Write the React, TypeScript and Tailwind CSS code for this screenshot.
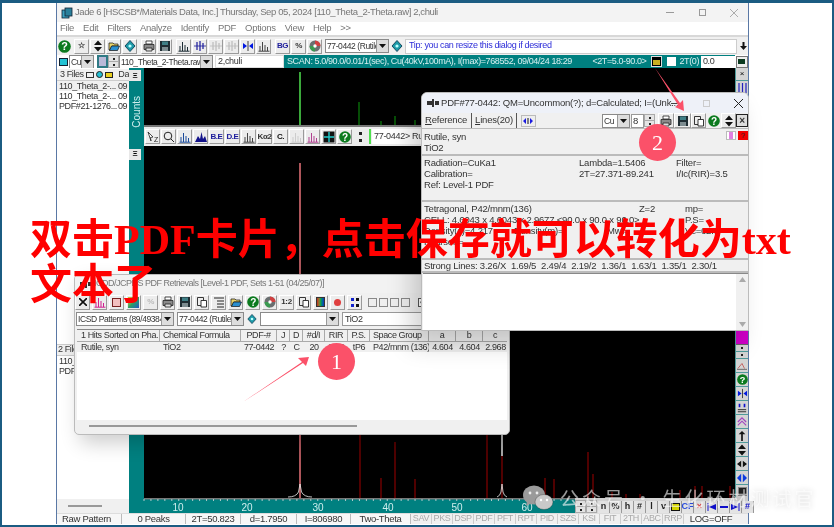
import React from "react";

function Tb({ children, w = "w-[15px]" }: { children?: React.ReactNode; w?: string }) {
  return (
    <div className={`${w} h-[15px] shrink-0 flex items-center justify-center bg-[#ececec] border-r border-b border-[#9a9a9a] border-t-white border-l-white border-t border-l`}>
      {children}
    </div>
  );
}
function S({ children, s = 12 }: { children: React.ReactNode; s?: number }) {
  return <svg width={s} height={s} viewBox="0 0 12 12">{children}</svg>;
}
const Help = ({ s = 12 }: { s?: number }) => (
  <S s={s}>
    <circle cx="6" cy="6" r="5.8" fill="#0b7a1e" />
    <text x="6" y="9.6" textAnchor="middle" fontSize="10" fontWeight="700" fill="#fff" fontFamily="Liberation Sans">?</text>
  </S>
);
const UpDown = () => (
  <S><path d="M6 0.5 10 5H2ZM6 11.5 2 7H10Z" fill="#111" /></S>
);
const Folder = () => (
  <S><path d="M1 3h4l1 1h4v2H4L2 10H1Z" fill="#e8d36a" stroke="#111" strokeWidth=".7" /><path d="M3.5 6H11.5L9.5 10.5H1.5Z" fill="#2a8fd0" stroke="#111" strokeWidth=".7" /></S>
);
const Printer = () => (
  <S><path d="M3 1h6v3H3Z" fill="#fff" stroke="#222" strokeWidth=".8" /><path d="M1 4.5h10v5H1Z" fill="#8a8a8a" stroke="#222" strokeWidth=".8" /><path d="M3 8h6v3H3Z" fill="#ddd" stroke="#222" strokeWidth=".8" /></S>
);
const Floppy = () => (
  <S><path d="M1 1h10v10H1Z" fill="#1f2d33" /><path d="M3 1.5h6v3.5H3Z" fill="#3f7f86" /><path d="M3 7h6v4H3Z" fill="#7d8c90" /></S>
);
const Copy = () => (
  <S><path d="M1.5 1.5h6v8h-6Z" fill="#eee" stroke="#222" strokeWidth=".9" /><path d="M5 4.5h5.5v6.5H5Z" fill="#fff" stroke="#222" strokeWidth=".9" /></S>
);
const Bars = ({ c = "#1b2a33" }: { c?: string }) => (
  <S><path d="M2 11V6M4.5 11V2M7 11V5M9.5 11V7M0.5 11.2H11.5" stroke={c} strokeWidth="1" fill="none" /></S>
);
const Marks = ({ c = "#1a1a9a" }: { c?: string }) => (
  <S><path d="M0 6H12" stroke={c} strokeWidth=".8" /><path d="M3 2V10M6 1V11M9 3V9" stroke={c} strokeWidth="1.2" /></S>
);
const Diamond = () => (
  <S><path d="M6 0.5 11 6 6 11.5 1 6Z" fill="#1c9aa8" stroke="#0c3d55" strokeWidth=".9" /><circle cx="6" cy="6" r="1.6" fill="#bff" /></S>
);
const Disc = () => (
  <S><circle cx="6" cy="6" r="5.5" fill="#6a6f70" /><path d="M6 .5A5.5 5.5 0 0 1 11.5 6H6Z" fill="#d04040" /><path d="M6 11.5A5.5 5.5 0 0 1 .5 6H6Z" fill="#3a9a50" /><circle cx="6" cy="6" r="1.7" fill="#fff" /></S>
);
const Arrows = ({ c = "#0018e0" }: { c?: string }) => (
  <S><path d="M5 6 1 3V9ZM7 6 11 3V9Z" fill={c} /><path d="M6 1V11" stroke="#111" strokeWidth=".8" /></S>
);
const Box = () => <div className="w-[9px] h-[9px] bg-[#eee] border border-[#888]" />;
const Lbl = ({ t, c = "text-[#333]" }: { t: string; c?: string }) => (
  <span className={`text-[8px] font-bold leading-none tracking-[-0.4px] ${c}`}>{t}</span>
);

function Combo({ text, w }: { text: string; w: string }) {
  return (
    <div className={`${w} h-[14px] shrink-0 flex items-stretch bg-white border border-[#8a8a8a] overflow-hidden`}>
      <span className="flex-1 min-w-0 px-px text-[8.5px] tracking-[-0.4px] leading-[12px] whitespace-nowrap overflow-hidden text-[#333]">{text}</span>
      <span className="w-[12px] shrink-0 bg-[#ddd] flex items-center justify-center border-l border-[#999]">
        <svg width="7" height="4" viewBox="0 0 7 4"><path d="M0 0H7L3.5 4Z" fill="#111" /></svg>
      </span>
    </div>
  );
}

function Spin() {
  return (
    <div className="w-[11px] h-[13px] shrink-0 flex flex-col bg-[#e4e4e4] border border-[#aaa]">
      <div className="flex-1 flex items-center justify-center border-b border-[#aaa]"><div className="w-[2px] h-[2px] bg-[#222]" /></div>
      <div className="flex-1 flex items-center justify-center"><div className="w-[2px] h-[2px] bg-[#222]" /></div>
    </div>
  );
}

function TopChart() {
  const peaks: [number, number][] = [[359, 102], [381, 121], [395, 116], [415, 120], [300, 72]];
  return (
    <svg className="block w-[592px] h-[57px] shrink-0 bg-black" viewBox="144 68 592 57">
      {peaks.map(([x, y]) => (
        <line key={x} x1={x} x2={x} y1={y} y2={125} stroke={x === 300 ? "#4fe04f" : "#0c9a0c"} strokeWidth={x === 300 ? 1.5 : 1} />
      ))}
    </svg>
  );
}

function LowerChart() {
  const peaks: [number, number][] = [[360, 290], [381, 478], [395, 442], [415, 479], [487, 400], [502, 456], [545, 478], [554, 479], [588, 452], [593, 474], [612, 492], [626, 494], [640, 494], [680, 490], [695, 486], [702, 486], [730, 486]];
  return (
    <svg className="block w-[592px] h-[352px] bg-black" viewBox="144 146 592 352">
      <line x1={300} x2={300} y1={163} y2={498} stroke="#e8737a" strokeWidth={1.5} />
      {peaks.map(([x, y]) => (
        <line key={x} x1={x} x2={x} y1={y} y2={498} stroke="#a00000" strokeWidth={1} />
      ))}
      <line x1={502} x2={502} y1={430} y2={456} stroke="#e0e0e0" strokeWidth={1.5} />
      <path d="M288 497 Q296 497 298.5 492 L300 484 L301.5 492 Q304 497 312 497" fill="none" stroke="#eee" strokeWidth=".8" />
      <path d="M497 497 Q500 496 501 492 L502 484 L503 492 Q504 496 507 497" fill="none" stroke="#eee" strokeWidth=".8" />
    </svg>
  );
}

function Axis() {
  const ticks = Array.from({ length: 62 }, (_, i) => 144 + i * 6.95);
  return (
    <svg className="block w-[446px] h-[15px] shrink-0 bg-[#008080]" viewBox="129 498 446 15">
      <rect x={144} y={498} width={431} height={1.5} fill="#777" />
      {ticks.map((x) => <line key={x} x1={x} x2={x} y1={499} y2={501} stroke="#ddd" strokeWidth=".8" />)}
      {[[178, "10"], [247, "20"], [318, "30"], [388, "40"], [457, "50"], [527, "60"]].map(([x, t]) => (
        <text key={t} x={x as number} y={511} textAnchor="middle" fontSize="10" fill="#cfeeee" fontFamily="Liberation Sans">{t}</text>
      ))}
    </svg>
  );
}

function SideBtn({ children, h = "h-[14px]" }: { children?: React.ReactNode; h?: string }) {
  return <div className={`${h} w-[12px] shrink-0 flex items-center justify-center bg-[#d4d4d4] border-b border-[#4f9a9a]`}>{children}</div>;
}

function AxisKey({ children, cls = "text-[#222]" }: { children: React.ReactNode; cls?: string }) {
  return <div className={`w-[12px] h-[12px] shrink-0 flex items-center justify-center bg-[#e4e4e4] border-r border-[#999] text-[9px] font-bold ${cls}`}>{children}</div>;
}

function MainWindow() {
  const status: [string, string][] = [
    ["Raw Pattern", "w-[65px] pr-[5px]"], ["0 Peaks", "w-[64px]"], ["2T=50.823", "w-[55px]"], ["d=1.7950", "w-[56px]"], ["I=806980", "w-[54px]"], ["Two-Theta", "w-[60px]"],
  ];
  const small = ["SAV", "PKS", "DSP", "PDF", "PFT", "RPT", "PID", "SZS", "KSI", "FIT", "2TH", "ABC", "RRP"];
  return (
    <div className="w-[693px] h-[521px] flex flex-col border-x border-[#5a78a5] bg-[#f0f0f0]">
      <div className="h-[19px] shrink-0 flex items-center pl-[4px] bg-[#f3f3f3] text-[#777] text-[9.5px] tracking-[-0.4px] whitespace-nowrap">
        <svg width="12" height="12" viewBox="0 0 12 12" className="mr-[2px]"><rect x="1" y="3" width="7" height="8" fill="#3aa0c0" stroke="#123" strokeWidth=".8" /><rect x="4" y="1" width="7" height="8" fill="#2a7f9a" stroke="#123" strokeWidth=".8" /></svg>
        <span className="flex-1">Jade 6 [HSCSB*/Materials Data, Inc.] Thursday, Sep 05, 2024 [110_Theta_2-Theta.raw] 2,chuli</span>
        <div className="w-[88px] flex justify-between items-center pl-[6px] pr-[10px]">
          <div className="w-[8px] h-px bg-[#999]" />
          <div className="w-[7px] h-[7px] border border-[#999]" />
          <svg width="8" height="8" viewBox="0 0 8 8"><path d="M0 0 8 8M8 0 0 8" stroke="#999" strokeWidth=".8" /></svg>
        </div>
      </div>
      <div className="h-[13px] shrink-0 flex items-center gap-[9px] pl-[3px] bg-white text-[#777] text-[9.5px] tracking-[-0.3px]">
        {["File", "Edit", "Filters", "Analyze", "Identify", "PDF", "Options", "View", "Help", ">>"].map((m) => <span key={m}>{m}</span>)}
      </div>
      <div className="h-[2px] shrink-0 bg-[#d8d8d8]" />
      <div className="h-[18px] shrink-0 flex items-center pl-[1px] gap-px bg-[#f0f0f0]">
        <Help s={13} />
        <div className="w-px" />
        <Tb><Lbl t="☆" /></Tb><Tb><UpDown /></Tb><Tb><Folder /></Tb><Tb><Diamond /></Tb>
        <div className="w-[2px]" />
        <Tb><Printer /></Tb><Tb><Floppy /></Tb>
        <div className="w-[2px]" />
        <Tb><Bars /></Tb><Tb><Marks /></Tb><Tb><Marks c="#bbb" /></Tb><Tb><Marks c="#bbb" /></Tb><Tb><Arrows /></Tb><Tb><Bars c="#444" /></Tb>
        <div className="w-[2px]" />
        <Tb><Lbl t="BG" c="text-[#1a1a9a]" /></Tb><Tb><Lbl t="%" /></Tb><Tb><Disc /></Tb>
        <div className="w-px" />
        <Combo text="77-0442 (Rutile" w="w-[64px]" />
        <div className="w-[14px] h-[15px] flex items-center justify-center"><Diamond /></div>
        <div className="flex-1 h-[15px] flex items-center pl-[3px] bg-white border border-[#ccc] text-[9px] tracking-[-0.35px] text-[#2d2dd8] whitespace-nowrap">Tip: you can resize this dialog if desired</div>
        <div className="w-[10px] flex justify-center"><svg width="7" height="8" viewBox="0 0 7 8"><path d="M2.5 0h2v4H7L3.5 8 0 4h2.5Z" fill="#111" /></svg></div>
      </div>
      <div className="h-[13px] shrink-0 flex items-center bg-white">
        <div className="w-[12px] shrink-0 flex justify-center"><div className="w-[9px] h-[8px] bg-[#24c3d4] border border-[#123]" /></div>
        <Combo text="Cu" w="w-[25px]" />
        <div className="w-[3px] shrink-0" />
        <div className="w-[11px] h-[13px] shrink-0 bg-[#b9b9d8] border-2 border-[#2f7a85]" />
        <Spin />
        <Combo text="110_Theta_2-Theta.raw" w="w-[94px]" />
        <div className="w-[2px] shrink-0" />
        <div className="w-[69px] shrink-0 h-[13px] border border-[#ddd] pl-[2px] text-[9px] tracking-[-0.3px] leading-[11px] text-[#333]">2,chuli</div>
        <div className="flex-1 min-w-0 h-[13px] flex items-center pl-[3px] bg-[#008080] text-[#d8f0f0] text-[9px] tracking-[-0.4px] whitespace-nowrap overflow-hidden">
          <span className="flex-1">SCAN: 5.0/90.0/0.01/1(sec), Cu(40kV,100mA), I(max)=768552, 09/04/24 18:29</span>
          <span className="mr-[5px]">&lt;2T=5.0-90.0&gt;</span>
          <div className="w-[11px] h-[11px] bg-black border border-[#ddd] mr-[5px]"><div className="w-[7px] h-[5px] mx-auto mt-[3px] bg-[#c8b020]" /></div>
          <div className="w-[9px] h-[9px] bg-white mr-[3px]" />
          <span className="mr-[2px]">2T(0)</span>
          <div className="w-[34px] h-[12px] bg-white text-[#333] pl-[2px] leading-[11px]">0.0</div>
        </div>
        <div className="w-[13px] shrink-0 flex justify-center"><div className="w-[12px] h-[12px] flex items-center justify-center bg-[#eee] border border-[#777]"><div className="w-[7px] h-[5px] bg-[#0b3a20]" /></div></div>
      </div>
      <div className="flex-1 flex min-h-0">
        <div className="w-[72px] shrink-0 flex flex-col bg-white text-[9px] tracking-[-0.4px] text-[#333] whitespace-nowrap overflow-hidden">
          <div className="h-[12px] mt-px flex items-center bg-[#f0f0f0] border-b border-[#ccc]">
            <span className="pl-[3px] w-[60px] flex gap-[2px] items-center">3 Files
              <span className="w-[8px] h-[6px] border border-[#333]" /><span className="w-[7px] h-[7px] bg-[#22bcd0] rounded-full border border-[#222]" /><span className="w-[8px] h-[6px] bg-[#ead020] border border-[#222]" /></span>
            <span className="pl-[2px]">Da</span>
          </div>
          {["110_Theta_2-...", "110_Theta_2-...", "PDF#21-1276..."].map((f, i) => (
            <div key={i} className={`h-[10px] shrink-0 flex leading-[10px] ${i === 0 ? "bg-[#f0f0f0]" : ""}`}>
              <span className="pl-[2px] w-[61px]">{f}</span><span>09</span>
            </div>
          ))}
          <div className="mt-[233px] h-[12px] flex items-center bg-[#f0f0f0] border-y border-[#ccc] pl-[1px]">2 Files</div>
          <div className="h-[10px] leading-[10px] pl-[2px]">110_Theta_2-...</div>
          <div className="h-[10px] leading-[10px] pl-[2px]">PDF#21-1276...</div>
          <div className="flex-1" />
          <div className="h-[14px] flex items-center bg-[#f0f0f0] pl-[11px]"><div className="w-[34px] h-[2px] bg-[#999]" /></div>
        </div>
        <div className="flex-1 flex flex-col min-w-0">
          <div className="flex-1 flex min-h-0">
            <div className="w-[15px] shrink-0 flex flex-col bg-[#008080]">
              <div className="h-[11px] mt-[2px] mr-[3px] bg-[#e8e8e8] flex items-center justify-center text-[8px] font-bold">Ξ</div>
              <span className="mt-[15px] [writing-mode:vertical-rl] rotate-180 text-[10px] text-[#cfeeee] self-center">Counts</span>
              <div className="h-[11px] mt-[21px] mr-[3px] bg-[#e8e8e8] flex items-center justify-center text-[8px] font-bold">Ξ</div>
            </div>
            <div className="flex-1 flex flex-col min-w-0 overflow-hidden">
              <TopChart />
              <div className="h-[2px] shrink-0 bg-[#777]" />
              <div className="h-[19px] shrink-0 flex items-center gap-px pl-[1px] bg-[#ececec]">
                <Tb><svg width="12" height="12" viewBox="0 0 12 12"><path d="M1 1 6 6 3.5 6.5 4 10Z" fill="#fff" stroke="#222" strokeWidth=".8" /><text x="7" y="11" fontSize="7" fill="#222">Z</text></svg></Tb>
                <Tb><svg width="12" height="12" viewBox="0 0 12 12"><circle cx="5" cy="5" r="3.8" fill="none" stroke="#222" /><path d="M8 8l3 3" stroke="#222" /></svg></Tb>
                <Tb><Bars c="#1a4a9a" /></Tb><Tb><svg width="12" height="12" viewBox="0 0 12 12"><path d="M0 11 3 5 5 8 6.5 1 8 8 10 5 12 11Z" fill="#12128a" /></svg></Tb>
                <Tb><Lbl t="B.E" c="text-[#1a1a9a]" /></Tb><Tb><Lbl t="D.E" c="text-[#1a1a9a]" /></Tb><Tb><Bars c="#444" /></Tb>
                <Tb><Lbl t="Kα2" /></Tb><Tb><Lbl t="C." c="text-[#111]" /></Tb><Tb><Bars c="#ccc" /></Tb><Tb><Bars c="#b04090" /></Tb>
                <Tb><svg width="12" height="12" viewBox="0 0 12 12"><rect x=".5" y=".5" width="11" height="11" fill="#111" /><path d="M6 1V11M1 6H11" stroke="#2cc" strokeWidth="1.4" /></svg></Tb>
                <Tb><Help /></Tb>
                <div className="w-[15px] h-[19px] flex flex-col items-center justify-center gap-[4px]"><div className="w-[3px] h-[3px] bg-[#222]" /><div className="w-[3px] h-[3px] bg-[#222]" /></div>
                <div className="w-[2px] h-[15px] bg-[#4ee04e]" />
                <div className="w-[120px] h-[15px] bg-white pl-[2px] text-[9px] tracking-[-0.3px] leading-[15px] text-[#333] whitespace-nowrap">77-0442&gt; Rutile</div>
              </div>
              <div className="flex-1 min-h-0"><LowerChart /></div>
            </div>
            <div className="w-[13px] shrink-0 flex flex-col bg-[#c8c8c8] border-l border-[#4f9a9a] text-[8px]">
              <SideBtn h="h-[13px]">×</SideBtn>
              <SideBtn h="h-[15px]"><svg width="9" height="10" viewBox="0 0 9 10"><path d="M1 0V10M4.5 0V10M8 0V10" stroke="#2222c0" strokeWidth="1.2" /></svg></SideBtn>
              <div className="h-[235px] shrink-0" />
              <div className="h-[14px] shrink-0 bg-[#d000c8] border-b border-[#666]" />
              <SideBtn h="h-[7px]"><div className="w-[2px] h-[2px] bg-[#222]" /></SideBtn>
              <SideBtn h="h-[7px]"><div className="w-[2px] h-[2px] bg-[#222]" /></SideBtn>
              <SideBtn><S s={10}><path d="M1 9 6 3 9 9" stroke="#c05050" fill="none" /><path d="M0 10H12" stroke="#555" /></S></SideBtn>
              <SideBtn><Help s={11} /></SideBtn>
              <SideBtn><S s={11}><Arrows /></S></SideBtn>
              <SideBtn><S s={10}><path d="M3 1V5M9 1V5" stroke="#11c" strokeWidth="2" /><path d="M1 8H11M1 10.5H11" stroke="#111" /></S></SideBtn>
              <SideBtn><S s={10}><path d="M1 6 6 1 11 6M1 10 6 5 11 10" stroke="#a040c0" strokeWidth="1.3" fill="none" /></S></SideBtn>
              <SideBtn><S s={10}><path d="M6 0 10 4H7V12H5V4H2Z" fill="#111" /></S></SideBtn>
              <SideBtn><UpDown /></SideBtn>
              <SideBtn><S s={10}><path d="M0 6 5 2V10ZM12 6 7 2V10Z" fill="#111" /></S></SideBtn>
              <SideBtn><S s={10}><path d="M0 6 5 1V11ZM12 6 7 1V11Z" fill="#0a3ae0" /></S></SideBtn>
              <SideBtn><div className="w-[9px] h-[9px] bg-[#222] border border-[#888]" /></SideBtn>
            </div>
          </div>
          <div className="h-[15px] shrink-0 flex bg-[#d4d4d4]">
            <Axis />
            <div className="flex-1 flex items-end">
              <Spin /><Spin />
              <div className="w-px shrink-0" />
              {["n", "%", "h", "#", "l", "v"].map((k) => <AxisKey key={k}>{k}</AxisKey>)}
              <AxisKey><div className="w-[9px] h-[8px] bg-[#d8d800] border border-[#111]" /></AxisKey>
              <AxisKey cls="text-[#2a4ee0]">CF</AxisKey>
              <AxisKey cls="text-[#e04848]">×</AxisKey>
              <AxisKey><svg width="9" height="8" viewBox="0 0 9 8"><path d="M1 0V8" stroke="#11c" /><path d="M2 4 9 1V7Z" fill="#11c" /></svg></AxisKey>
              <AxisKey><div className="w-[8px] h-[2px] bg-[#11c]" /></AxisKey>
              <AxisKey><svg width="9" height="8" viewBox="0 0 9 8"><path d="M8 0V8" stroke="#11c" /><path d="M7 4 0 1V7Z" fill="#11c" /></svg></AxisKey>
              <AxisKey cls="text-[#11c]">#</AxisKey>
            </div>
          </div>
        </div>
      </div>
      <div className="h-[11px] shrink-0 flex items-center bg-[#f0f0f0] text-[9.5px] tracking-[-0.3px] text-[#333] border-t border-[#ddd] whitespace-nowrap">
        {status.map(([t, w]) => (
          <div key={t} className={`${w} h-[10px] shrink-0 flex items-center justify-center bg-[#f7f7f7] border-r border-[#bbb]`}>{t}</div>
        ))}
        {small.map((t) => (
          <div key={t} className="w-[21px] h-[10px] shrink-0 flex items-center justify-center text-[#aaa] border-r border-[#ccc] text-[9px]">{t}</div>
        ))}
        <div className="ml-[8px] w-[38px] h-[10px] flex items-center justify-center bg-[#f7f7f7]">LOG=OFF</div>
      </div>
    </div>
  );
}

function PdfDialog() {
  return (
    <div className="absolute left-[419px] top-[89px] w-[328px] h-[239px] flex flex-col bg-[#f0f0f0] rounded-t-[6px] border border-[#bbb] shadow-[-10px_14px_24px_rgba(0,0,0,0.18)] text-[9.5px] tracking-[-0.2px] text-[#333] overflow-hidden">
      <div className="h-[20px] shrink-0 flex items-center pl-[5px] bg-[#eef1f8] whitespace-nowrap">
        <svg width="12" height="10" viewBox="0 0 12 10" className="mr-[2px]"><path d="M0 3H5V1H7V9H5V7H0ZM8 3H12V7H8Z" fill="#333" /></svg>
        <span className="w-[214px] shrink-0">PDF#77-0442: QM=Uncommon(?); d=Calculated; I=(Unk...</span>
        <div className="w-[8px] h-px bg-[#444] ml-[16px]" />
        <div className="w-[7px] h-[7px] border border-[#ccc] ml-[24px]" />
        <svg width="9" height="9" viewBox="0 0 9 9" className="ml-[24px]"><path d="M0 0 9 9M9 0 0 9" stroke="#222" /></svg>
      </div>
      <div className="h-[15px] shrink-0 flex items-center pl-[3px] whitespace-nowrap">
        <span className="pr-[4px] border-r border-[#555]"><u>R</u>eference</span>
        <span className="px-[3px] border-r border-[#555]"><u>L</u>ines(20)</span>
        <div className="ml-[4px] w-[15px] h-[12px] flex items-center justify-center bg-[#eee] border border-[#bbb]"><svg width="10" height="6" viewBox="0 0 10 6"><path d="M0 3 3 0V6ZM10 3 7 0V6Z" fill="#1a1ae0" /><path d="M5 0V6" stroke="#111" /></svg></div>
        <div className="flex-1" />
        <Combo text="Cu" w="w-[28px]" />
        <div className="w-[13px] h-[14px] bg-white border border-[#999] pl-[1px] leading-[12px] ml-px">8</div>
        <Spin />
        <div className="w-[3px]" />
        <Tb w="w-[16px]"><Printer /></Tb><Tb w="w-[17px]"><Floppy /></Tb><Tb w="w-[15px]"><Copy /></Tb><div className="w-[15px] flex justify-center"><Help /></div><Tb><UpDown /></Tb>
        <div className="w-[12px] h-[13px] flex items-center justify-center bg-[#ddd] border border-[#222] text-[10px] font-bold">×</div>
      </div>
      <div className="h-[26px] shrink-0 border-t border-[#bbb] pl-[2px] flex justify-between leading-[11px]">
        <div className="pt-[2px]"><div>Rutile, syn</div><div>TiO2</div></div>
        <div className="flex items-start pt-[2px]">
          <div className="w-[10px] h-[9px] bg-white border border-[#bbb] flex justify-center"><div className="w-[4px] h-[7px] bg-[#e080e0]" /></div>
          <div className="w-[10px] h-[9px] ml-[2px] bg-[#f00000] text-center text-[8px] leading-[9px] text-[#222]">?</div>
        </div>
      </div>
      <div className="h-[46px] shrink-0 border-t-2 border-[#bbb] pl-[2px] leading-[11px] pt-[1px] grid grid-cols-[155px_97px_1fr] content-start whitespace-nowrap">
        <span>Radiation=CuKa1</span><span>Lambda=1.5406</span><span>Filter=</span>
        <span>Calibration=</span><span>2T=27.371-89.241</span><span>I/Ic(RIR)=3.5</span>
        <span>Ref: Level-1 PDF</span>
      </div>
      <div className="h-[58px] shrink-0 border-t-2 border-[#bbb] pl-[2px] leading-[11px] pt-[1px] whitespace-nowrap">
        <div className="flex"><span className="w-[215px]">Tetragonal,  P42/mnm(136)</span><span className="w-[46px]">Z=2</span><span>mp=</span></div>
        <div className="flex"><span className="w-[261px]">CELL: 4.6043 x 4.6043 x 2.9677 &lt;90.0 x 90.0 x 90.0&gt;</span><span>P.S=</span></div>
        <div className="flex"><span className="w-[90px]">Density(c)=4.217</span><span className="w-[93px]">Density(m)=</span><span className="w-[78px]">Mwt=</span><span>Vc=62.9</span></div>
        <div>Pearson=</div>
      </div>
      <div className="h-[15px] shrink-0 border-y-2 border-[#bbb] pl-[2px] leading-[11px] whitespace-pre">Strong Lines: 3.26/X  1.69/5  2.49/4  2.19/2  1.36/1  1.63/1  1.35/1  2.30/1</div>
      <div className="flex-1 ml-[1px] flex bg-white border-t border-[#888]">
        <div className="flex-1" />
        <div className="w-[12px] bg-[#f0f0f0] flex flex-col justify-between items-center py-[3px]">
          <svg width="7" height="5" viewBox="0 0 7 5"><path d="M3.5 0 7 5H0Z" fill="#aaa" /></svg>
          <svg width="7" height="5" viewBox="0 0 7 5"><path d="M0 0H7L3.5 5Z" fill="#aaa" /></svg>
        </div>
      </div>
    </div>
  );
}

function RetrievalDialog() {
  const cols: [string, string, string][] = [
    ["1 Hits Sorted on Pha...", "w-[83px] text-left pl-[4px]", "Rutile, syn"],
    ["Chemical Formula", "w-[81px] text-left pl-[3px]", "TiO2"],
    ["PDF-#", "w-[36px] text-center", "77-0442"],
    ["J", "w-[13px] text-center", "?"],
    ["D", "w-[13px] text-center", "C"],
    ["#d/I", "w-[22px] text-center", "20"],
    ["RIR", "w-[23px] text-center", "3.50"],
    ["P.S.", "w-[22px] text-center", "tP6"],
    ["Space Group", "w-[59px] text-left pl-[3px]", "P42/mnm (136)"],
    ["a", "w-[27px] text-center", "4.604"],
    ["b", "w-[27px] text-center", "4.604"],
    ["c", "w-[25px] text-center", "2.968"],
  ];
  return (
    <div className="absolute left-[72px] top-[271px] w-[436px] h-[161px] flex flex-col bg-[#f0f0f0] rounded-[5px] border border-[#bbb] shadow-[6px_8px_20px_rgba(0,0,0,0.2)] text-[9px] tracking-[-0.4px] text-[#333] overflow-hidden">
      <div className="h-[18px] shrink-0 flex items-center pl-[5px] bg-[#f2f2f2] tracking-[-0.5px] text-[#777] whitespace-nowrap">
        <svg width="12" height="10" viewBox="0 0 12 10" className="mr-[2px]"><path d="M0 3H5V1H7V9H5V7H0ZM8 3H12V7H8Z" fill="#333" /></svg>
        ICDD/JCPDS PDF Retrievals [Level-1 PDF, Sets 1-51 (04/25/07)]
      </div>
      <div className="h-[18px] shrink-0 flex items-center gap-[2px]">
        <Tb><svg width="8" height="8" viewBox="0 0 8 8"><path d="M0 0 8 8M8 0 0 8" stroke="#111" strokeWidth="1.6" /></svg></Tb>
        <Tb><Bars c="#d02090" /></Tb><Tb><div className="w-[9px] h-[9px] bg-[#f2c0c0] border border-[#722]" /></Tb>
        <Tb><div className="w-[11px] h-[11px] bg-gradient-to-br from-[#e0c020] via-[#30a060] to-[#3050c0]" /></Tb>
        <Tb><Lbl t="%" c="text-[#bbb]" /></Tb><Tb><Printer /></Tb><Tb><Floppy /></Tb><Tb><Copy /></Tb>
        <Tb><S><path d="M1 2H11M4 5H11M4 8H11M4 11H11" stroke="#222" strokeWidth="1.2" /></S></Tb>
        <Tb><Folder /></Tb><Tb><Help /></Tb><Tb><Disc /></Tb><Tb><Lbl t="1:2" /></Tb><Tb><Copy /></Tb>
        <Tb><div className="w-[9px] h-[10px] bg-gradient-to-r from-[#c02020] via-[#20a040] to-[#2020c0] border border-[#333]" /></Tb>
        <Tb><div className="w-[7px] h-[7px] rounded-full bg-[#e04040]" /></Tb>
        <Tb><S><path d="M2 2H5V5H2ZM2 8H5V11H2Z" fill="#1122cc" /><path d="M7 2H10V5H7ZM7 8H10V11H7Z" fill="#111" /></S></Tb>
        <div className="w-[2px]" /><Box /><Box /><Box /><Box />
        <div className="w-[4px]" />
        <div className="w-[9px] h-[9px] border border-[#555] bg-white flex items-center justify-center text-[8px] leading-none">✓</div><Box />
      </div>
      <div className="h-[15px] shrink-0 flex items-center gap-[3px] pl-[1px]">
        <Combo text="ICSD Patterns (89/49384" w="w-[98px]" /><Combo text="77-0442 (Rutile," w="w-[67px]" />
        <div className="w-[10px] flex justify-center"><Diamond /></div>
        <Combo text="" w="w-[79px]" />
        <div className="flex-1 h-[14px] bg-white border border-[#999] pl-[2px] leading-[12px]">TiO2</div>
      </div>
      <div className="h-[3px] shrink-0" />
      <div className="flex-1 mx-[2px] mb-[2px] flex flex-col bg-white border-t border-[#888] overflow-hidden">
        <div className="h-[12px] shrink-0 flex bg-[#f0f0f0] border-b border-[#aaa] whitespace-nowrap">
          {cols.map(([h, w]) => <div key={h} className={`${w} shrink-0 leading-[11px] border-r border-[#aaa] overflow-hidden`}>{h}</div>)}
        </div>
        <div className="h-[10px] shrink-0 flex bg-[#f0f0f0] whitespace-nowrap">
          {cols.map(([h, w, v]) => <div key={h} className={`${w} shrink-0 leading-[10px] overflow-hidden`}>{v}</div>)}
        </div>
        <div className="flex-1" />
        <div className="h-[12px] shrink-0 flex items-center pl-[12px] bg-[#f0f0f0]"><div className="w-[268px] h-[2px] bg-[#999]" /></div>
      </div>
    </div>
  );
}

function Badge({ n, cls }: { n: string; cls: string }) {
  return (
    <div className={`absolute ${cls} w-[37px] h-[37px] rounded-full bg-[#fb5169] flex items-center justify-center text-white text-[22px] font-['Liberation_Serif',serif]`}>{n}</div>
  );
}

export default function App() {
  return (
    <div className="relative w-[834px] h-[527px] overflow-hidden bg-white border-x-2 border-t-[3px] border-b-2 border-[#1b5c82] pl-[54px] font-['Liberation_Sans',sans-serif] blur-[0.35px]">
      <MainWindow />
      <RetrievalDialog />
      <PdfDialog />
      <svg className="absolute left-0 top-0 pointer-events-none" width="834" height="527" viewBox="0 0 834 527">
        <path d="M243 402 302 362 298 358 309 357 306 366 303 363Z" fill="#fb5169" transform="translate(-2 -3)" />
        <path d="M655 68 680 103 683 100 684 111 675 107 678 105Z" fill="#fb5169" transform="translate(-2 -3)" />
      </svg>
      <Badge n="1" cls="left-[316px] top-[340px]" />
      <Badge n="2" cls="left-[637px] top-[121px]" />
      <div className="absolute left-[28px] top-[215px] w-[790px] text-[42px] leading-[45px] font-bold text-[#ff0000] font-['Liberation_Serif','Noto_Sans_CJK_SC',serif] break-all">
        双击PDF卡片，点击保存就可以转化为txt文本了
      </div>
      <div className="absolute left-[520px] top-[481px] flex items-center gap-[6px] text-[19px] tracking-[3px] text-white/60 whitespace-nowrap font-['Noto_Sans_CJK_SC',sans-serif] [text-shadow:0_0_6px_rgba(0,0,0,0.18)]">
        <svg width="32" height="26" viewBox="0 0 32 26">
          <ellipse cx="12" cy="10" rx="11" ry="9.5" fill="#9a9a9a" />
          <path d="M5 16 4 21 10 18Z" fill="#9a9a9a" />
          <ellipse cx="22" cy="17" rx="9" ry="7.5" fill="#c9c9c9" stroke="#000" strokeOpacity=".25" />
          <circle cx="8" cy="8" r="1.4" fill="#eee" /><circle cx="15" cy="8" r="1.4" fill="#eee" />
          <circle cx="19" cy="15" r="1.2" fill="#fff" /><circle cx="25" cy="15" r="1.2" fill="#fff" />
        </svg>
        <span>公众号 · 生化环材测试官</span>
      </div>
    </div>
  );
}
